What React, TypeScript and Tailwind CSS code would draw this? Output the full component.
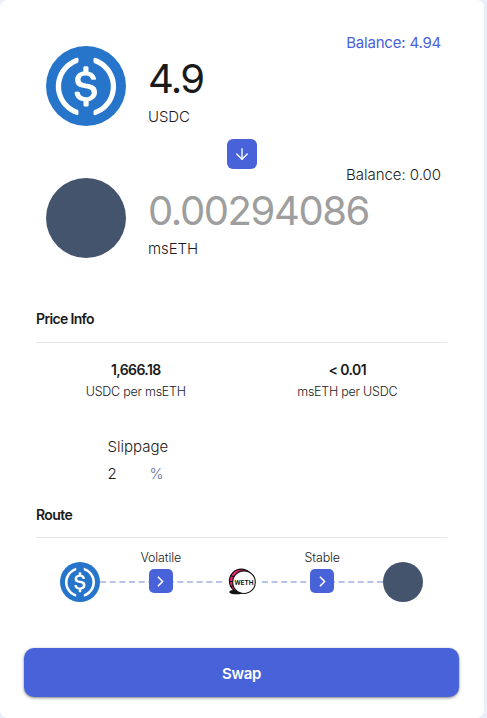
import { ArrowDown, ChevronRight } from 'lucide-react';

interface TokenIconProps {
  className: string;
}

function UsdcIcon({ className }: TokenIconProps) {
  return (
    <svg className={className} viewBox="0 0 2000 2000">
      <circle cx="1000" cy="1000" r="1000" fill="#2775ca" />
      <path
        fill="#fff"
        d="M1275 1158.33c0-145.83-87.5-195.83-262.5-216.66-125-16.67-150-50-150-108.34s41.67-95.83 125-95.83c75 0 116.67 25 137.5 87.5 4.17 12.5 16.67 20.83 29.17 20.83h66.66c16.67 0 29.17-12.5 29.17-29.16v-4.17c-16.67-91.67-91.67-162.5-187.5-170.83v-100c0-16.67-12.5-29.17-33.33-33.34h-62.5c-16.67 0-29.17 12.5-33.34 33.34v95.83c-125 16.67-204.16 100-204.16 204.17 0 137.5 83.33 191.66 258.33 212.5 116.67 20.83 154.17 45.83 154.17 112.5s-58.34 112.5-137.5 112.5c-108.34 0-145.84-45.84-158.34-108.34-4.16-16.66-16.66-25-29.16-25h-70.84c-16.66 0-29.16 12.5-29.16 29.17v4.17c16.66 104.16 83.33 179.16 220.83 200v100c0 16.66 12.5 29.16 33.33 33.33h62.5c16.67 0 29.17-12.5 33.34-33.33v-100c125-20.84 208.33-108.34 208.33-220.84z"
      />
      <path
        fill="#fff"
        d="M787.5 1595.83c-325-116.66-491.67-479.16-370.83-800 62.5-175 200-308.33 370.83-370.83 16.67-8.33 25-20.83 25-41.67V325c0-16.67-8.33-29.17-25-33.33-4.17 0-12.5 0-16.67 4.16-395.83 125-612.5 545.84-487.5 941.67 75 233.33 254.17 412.5 487.5 487.5 16.67 8.33 33.34 0 37.5-16.67 4.17-4.16 4.17-8.33 4.17-16.66v-58.34c0-12.5-12.5-29.16-25-37.5zM1229.17 295.83c-16.67-8.33-33.34 0-37.5 16.67-4.17 4.17-4.17 8.33-4.17 16.67v58.33c0 16.67 12.5 33.33 25 41.67 325 116.66 491.67 479.16 370.83 800-62.5 175-200 308.33-370.83 370.83-16.67 8.33-25 20.83-25 41.67V1700c0 16.67 8.33 29.17 25 33.33 4.17 0 12.5 0 16.67-4.16 395.83-125 612.5-545.84 487.5-941.67-75-237.5-258.34-416.67-487.5-491.67z"
      />
    </svg>
  );
}

function WethIcon({ className }: TokenIconProps) {
  return (
    <svg className={className} viewBox="0 0 28 28">
      <ellipse cx="8.5" cy="24" rx="7.2" ry="2.3" fill="#111" />
      <circle cx="13.2" cy="12.9" r="11.8" fill="#e5246f" stroke="#111" strokeWidth="1.1" />
      <path d="M1.5 13.5h3.5M3 7.5l3 1.5M3 18.5l3-1" stroke="#111" strokeWidth="1.1" />
      <circle cx="16" cy="14.2" r="11.3" fill="#fff" stroke="#111" strokeWidth="1.1" />
      <text
        x="16.1"
        y="17"
        textAnchor="middle"
        textLength="19"
        lengthAdjust="spacingAndGlyphs"
        fontSize="7.8"
        fontWeight="600"
        fontFamily="Roboto, sans-serif"
        fill="#111"
      >
        WETH
      </text>
    </svg>
  );
}

interface RateProps {
  value: string;
  label: string;
}

function Rate({ value, label }: RateProps) {
  return (
    <div className="flex flex-1 flex-col items-center">
      <span className="text-sm leading-5 font-semibold tracking-[-0.6px]">{value}</span>
      <span className="mt-0.5 text-[12.5px] leading-5 font-[350] tracking-[-0.25px]">{label}</span>
    </div>
  );
}

// Dashed connector with the pool type and arrow stacked over its middle
function Hop({ type }: { type: string }) {
  return (
    <div className="grid h-[55px] w-[121.5px] items-start justify-items-center">
      <div className="col-start-1 row-start-1 mt-[34px] w-full border-t-2 border-dashed border-[#b9c3e6]" />
      <div className="col-start-1 row-start-1 flex flex-col items-center">
        <span className="h-[22px] text-[12.5px] leading-[22px] font-[350] tracking-[-0.15px]">{type}</span>
        <span className="flex size-6 items-center justify-center rounded-[5px] bg-[#4862d9] text-white">
          <ChevronRight className="size-[17px]" strokeWidth={2.4} />
        </span>
      </div>
    </div>
  );
}

export default function App() {
  return (
    <div className="h-[718px] w-[487px] overflow-hidden bg-[#eaf0fb] font-['Inter',sans-serif] text-[#1a1a1a]">
      <div className="h-[718px] w-[484px] rounded-lg bg-white pt-8">
        {/* From */}
        <section className="h-[132px]">
          <div className="pr-[43px] text-right text-[15px] leading-[22px] tracking-[-0.2px] text-[#4862d9]">
            Balance: 4.94
          </div>
          <div className="-mt-2 flex gap-[22px] pl-[46px]">
            <UsdcIcon className="size-20" />
            <div className="pt-2">
              <div className="text-[40px] leading-[50px] tracking-[-1.7px]">4.9</div>
              <div className="mt-[3px] text-[15px] leading-[20px] font-[350] tracking-[-0.1px]">USDC</div>
            </div>
          </div>
          <button className="mt-3 ml-[227px] flex size-[30px] items-center justify-center rounded-md bg-[#4862d9] text-white">
            <ArrowDown className="size-[18px]" strokeWidth={1.8} />
          </button>
        </section>

        {/* To */}
        <section className="h-[132px]">
          <div className="pr-[43px] text-right text-[15px] leading-[22px] font-[350] tracking-[-0.03px]">
            Balance: 0.00
          </div>
          <div className="-mt-2 flex gap-[22px] pl-[46px]">
            <div className="size-20 rounded-full bg-[#44546d]" />
            <div className="pt-2">
              <div className="text-[40px] leading-[50px] tracking-[-1.4px] text-[#9e9e9e]">0.00294086</div>
              <div className="mt-[3px] text-[15px] leading-[20px] font-[350] tracking-[-0.1px]">msETH</div>
            </div>
          </div>
        </section>

        <section className="mx-9 w-[411px] pt-[13px]">
          <h3 className="border-b border-[#e6e6e6] pb-[13px] text-sm leading-5 font-semibold tracking-[-0.65px]">
            Price Info
          </h3>
          <div className="-mx-[6px] flex pt-[17px]">
            <Rate value="1,666.18" label="USDC per msETH" />
            <Rate value="< 0.01" label="msETH per USDC" />
          </div>
          <div className="mt-[34px] ml-[71.5px] text-[15px] leading-[22px] font-[350]">
            <div>Slippage</div>
            <div className="mt-[5px] flex">
              <span className="w-[42px]">2</span>
              <span className="text-[#5f6ea6]">%</span>
            </div>
          </div>
        </section>

        <section className="mx-9 w-[411px] pt-[20px]">
          <h3 className="border-b border-[#e6e6e6] pb-3 text-sm leading-5 font-semibold tracking-[-0.6px]">
            Route
          </h3>
          <div className="flex items-end pt-[9px] pl-6">
            <UsdcIcon className="size-10" />
            <Hop type="Volatile" />
            <div className="flex size-10 items-center justify-center">
              <WethIcon className="size-7" />
            </div>
            <Hop type="Stable" />
            <div className="size-10 rounded-full bg-[#44546d]" />
          </div>
        </section>

        <button className="mt-[46px] ml-6 h-[49px] w-[435px] rounded-[10px] bg-[#4862d9] pt-[3px] text-[15px] font-semibold tracking-[-0.3px] text-white shadow-[0_1px_3px_rgba(0,0,0,0.5)]">
          Swap
        </button>
      </div>
    </div>
  );
}
